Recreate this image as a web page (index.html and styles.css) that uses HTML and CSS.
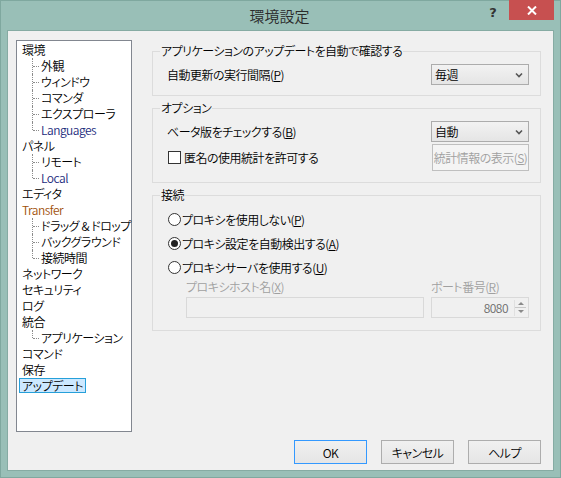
FILE: index.html
```html
<!DOCTYPE html>
<html lang="ja">
<head>
    <meta charset="UTF-8">
    <meta name="viewport" content="width=device-width, initial-scale=1.0">
    <title>環境設定</title>
    <link rel="stylesheet" href="styles.css">
</head>
<body>
    <div class="window">
        <div class="titlebar">
            <div></div>
            <div class="title">環境設定</div>
            <div class="title-buttons">
                <div class="help">?</div>
                <div class="close">
                    <svg width="10" height="9" viewBox="0 0 10 9"><path d="M1 0.5 L9 8.5 M9 0.5 L1 8.5" stroke="#fff" stroke-width="2"/></svg>
                </div>
            </div>
        </div>

        <div class="client">
            <div class="main">
                <div class="tree">
                    <div class="node">環境</div>
                    <div class="node child">外観</div>
                    <div class="node child">ウィンドウ</div>
                    <div class="node child">コマンダ</div>
                    <div class="node child">エクスプローラ</div>
                    <div class="node child last untranslated">Languages</div>
                    <div class="node">パネル</div>
                    <div class="node child">リモート</div>
                    <div class="node child last untranslated">Local</div>
                    <div class="node">エディタ</div>
                    <div class="node modified">Transfer</div>
                    <div class="node child">ドラッグ &amp; ドロップ</div>
                    <div class="node child">バックグラウンド</div>
                    <div class="node child last">接続時間</div>
                    <div class="node">ネットワーク</div>
                    <div class="node">セキュリティ</div>
                    <div class="node">ログ</div>
                    <div class="node">統合</div>
                    <div class="node child last">アプリケーション</div>
                    <div class="node">コマンド</div>
                    <div class="node">保存</div>
                    <div class="node"><span class="selected">アップデート</span></div>
                </div>

                <div class="pane">
                    <fieldset class="group">
                        <legend>アプリケーションのアップデートを自動で確認する</legend>
                        <div class="row row-first">
                            <span>自動更新の実行間隔(<u>P</u>)</span>
                            <div class="combo">
                                <span>毎週</span>
                                <svg width="8" height="6" viewBox="0 0 8 6"><path d="M1 1.5 L4 4.5 L7 1.5" fill="none" stroke="#555" stroke-width="1.6"/></svg>
                            </div>
                        </div>
                    </fieldset>

                    <fieldset class="group">
                        <legend>オプション</legend>
                        <div class="row row-first">
                            <span>ベータ版をチェックする(<u>B</u>)</span>
                            <div class="combo">
                                <span>自動</span>
                                <svg width="8" height="6" viewBox="0 0 8 6"><path d="M1 1.5 L4 4.5 L7 1.5" fill="none" stroke="#555" stroke-width="1.6"/></svg>
                            </div>
                        </div>
                        <div class="row row-check">
                            <label class="check"><span class="box"></span>匿名の使用統計を許可する</label>
                            <div class="button disabled stats">統計情報の表示(<u>S</u>)</div>
                        </div>
                    </fieldset>

                    <fieldset class="group">
                        <legend>接続</legend>
                        <div class="radios">
                            <label class="radio"><span class="dot"></span>プロキシを使用しない(<u>P</u>)</label>
                            <label class="radio"><span class="dot on"></span>プロキシ設定を自動検出する(<u>A</u>)</label>
                            <label class="radio"><span class="dot"></span>プロキシサーバを使用する(<u>U</u>)</label>
                        </div>
                        <div class="proxy">
                            <div class="field host">
                                <span class="caption">プロキシホスト名(<u>X</u>)</span>
                                <div class="input"></div>
                            </div>
                            <div class="field port">
                                <span class="caption">ポート番号(<u>R</u>)</span>
                                <div class="input spin">
                                    <span>8080</span>
                                    <div class="spinner">
                                        <div class="up"></div>
                                        <div class="down"></div>
                                    </div>
                                </div>
                            </div>
                        </div>
                    </fieldset>
                </div>
            </div>

            <div class="buttons">
                <div class="button default">OK</div>
                <div class="button">キャンセル</div>
                <div class="button">ヘルプ</div>
            </div>
        </div>
    </div>
</body>
</html>
```

FILE: styles.css
```css
body {
    margin: 0;
    font-family: "Noto Sans CJK JP", "Noto Sans", sans-serif;
    font-feature-settings: "palt";
    font-size: 12px;
    font-weight: 350;
    letter-spacing: -0.5px;
    color: #000;
    background: #99bfb7;
}

u {
    text-decoration: underline;
    text-underline-offset: 1px;
}

.window {
    width: 561px;
    height: 478px;
    box-sizing: border-box;
    border: 1px solid #7fa89f;
    background: #99bfb7;
    display: flex;
    flex-direction: column;
}

/* title bar */
.titlebar {
    height: 29px;
    display: grid;
    grid-template-columns: 1fr auto 1fr;
    padding-right: 6px;
}

.title {
    font-size: 15px;
    line-height: 29px;
    letter-spacing: 0;
    color: #2b2b2b;
    padding-left: 4px;
}

.title-buttons {
    display: flex;
    justify-content: flex-end;
    align-items: flex-start;
}

.help {
    width: 16px;
    margin-right: 8px;
    margin-top: 4px;
    font-family: "DejaVu Sans", sans-serif;
    font-weight: bold;
    font-size: 13px;
    letter-spacing: 0;
    color: #333;
    text-align: center;
}

.close {
    width: 45px;
    height: 20px;
    margin-top: -1px;
    background: #c75050;
    display: flex;
    align-items: center;
    justify-content: center;
}

/* client area */
.client {
    margin: 0 6px 6px 6px;
    height: 441px;
    box-sizing: border-box;
    border: 1px solid #86aba3;
    background: #f0f0f0;
    padding: 9px 11px 0 8px;
}

.main {
    display: flex;
    gap: 20px;
    height: 392px;
}

/* tree */
.tree {
    width: 116px;
    box-sizing: border-box;
    border: 1px solid #828790;
    background: #fff;
    padding-top: 1px;
}

.node {
    position: relative;
    height: 16px;
    line-height: 16px;
    padding-left: 5px;
    white-space: nowrap;
}

.node.child {
    padding-left: 24px;
}

.node.child::before {
    content: "";
    position: absolute;
    left: 15px;
    top: 0;
    bottom: 0;
    border-left: 1px dotted #8c8c8c;
}

.node.child.last::before {
    bottom: 8px;
}

.node.child::after {
    content: "";
    position: absolute;
    left: 16px;
    top: 8px;
    width: 6px;
    border-top: 1px dotted #8c8c8c;
}

.untranslated {
    color: #1b2a7c;
}

.modified {
    color: #a0500a;
}

.selected {
    display: inline-block;
    margin-left: -3px;
    padding: 0 2px;
    line-height: 13px;
    background: #cce8ff;
    border: 1px solid #26a0da;
}

/* right pane */
.pane {
    width: 389px;
    padding-top: 3px;
}

.group {
    margin: 0 0 4px 0;
    padding: 0 11px 0 14px;
    border: 1px solid #dcdcdc;
}

.group legend {
    margin-left: -7px;
    padding: 0 1px;
    line-height: 16px;
}

.row {
    display: flex;
    justify-content: space-between;
    align-items: center;
}

.row-first {
    margin-top: 5px;
    margin-bottom: 10px;
}

.group .row-first + .row-check {
    margin-top: -8px;
}

.row-check {
    margin-bottom: 11px;
}

.combo {
    width: 98px;
    height: 21px;
    box-sizing: border-box;
    border: 1px solid #acacac;
    background: linear-gradient(#f2f2f2, #e5e5e5);
    display: flex;
    align-items: center;
    justify-content: space-between;
    padding: 0 5px 0 3px;
}

.check {
    display: flex;
    align-items: center;
}

.check .box {
    width: 13px;
    height: 13px;
    box-sizing: border-box;
    border: 1px solid #333;
    background: #fff;
    margin: 0 3px 0 1px;
}

.button {
    width: 73px;
    height: 24px;
    box-sizing: border-box;
    border: 1px solid #adadad;
    background: linear-gradient(#f0f0f0, #e5e5e5);
    display: flex;
    align-items: center;
    justify-content: center;
    white-space: nowrap;
}

.button.default {
    border-color: #3399ff;
}

.button.disabled {
    color: #a0a0a0;
    border-color: #bfbfbf;
    background: #f4f4f4;
}

.button.stats {
    width: 97px;
    height: 27px;
}

.radios {
    margin-top: 4px;
}

.radio {
    display: flex;
    align-items: center;
    height: 24px;
}

.radio .dot {
    width: 13px;
    height: 13px;
    box-sizing: border-box;
    border: 1px solid #333;
    border-radius: 50%;
    background: #fff;
    margin: 0 1px 0 1px;
    display: flex;
    align-items: center;
    justify-content: center;
}

.radio .dot.on::after {
    content: "";
    width: 7px;
    height: 7px;
    border-radius: 50%;
    background: #222;
}

.proxy {
    display: flex;
    justify-content: space-between;
    padding-left: 19px;
    margin-bottom: 12px;
}

.field {
    display: flex;
    flex-direction: column;
    gap: 2px;
}

.caption {
    color: #a0a0a0;
    line-height: 16px;
}

.input {
    height: 21px;
    box-sizing: border-box;
    border: 1px solid #d9d9d9;
    background: #f0f0f0;
}

.host .input {
    width: 238px;
}

.spin {
    width: 98px;
    display: flex;
    align-items: center;
    justify-content: flex-end;
    color: #6d6d6d;
    padding-right: 2px;
}

.spinner {
    width: 11px;
    height: 16px;
    margin-left: 6px;
    display: flex;
    flex-direction: column;
    border-left: 1px solid #e0e0e0;
}

.spinner .up,
.spinner .down {
    flex: 1;
    display: flex;
    align-items: center;
    justify-content: center;
}

.spinner .up {
    border-bottom: 1px solid #c8c8c8;
}

.spinner .up::after {
    content: "";
    border: 3px solid transparent;
    border-bottom: 3px solid #8a8a8a;
    border-top: 0;
}

.spinner .down::after {
    content: "";
    border: 3px solid transparent;
    border-top: 3px solid #8a8a8a;
    border-bottom: 0;
}

/* dialog buttons */
.buttons {
    display: flex;
    justify-content: flex-end;
    gap: 14px;
    margin-top: 8px;
    margin-right: 1px;
}
```
